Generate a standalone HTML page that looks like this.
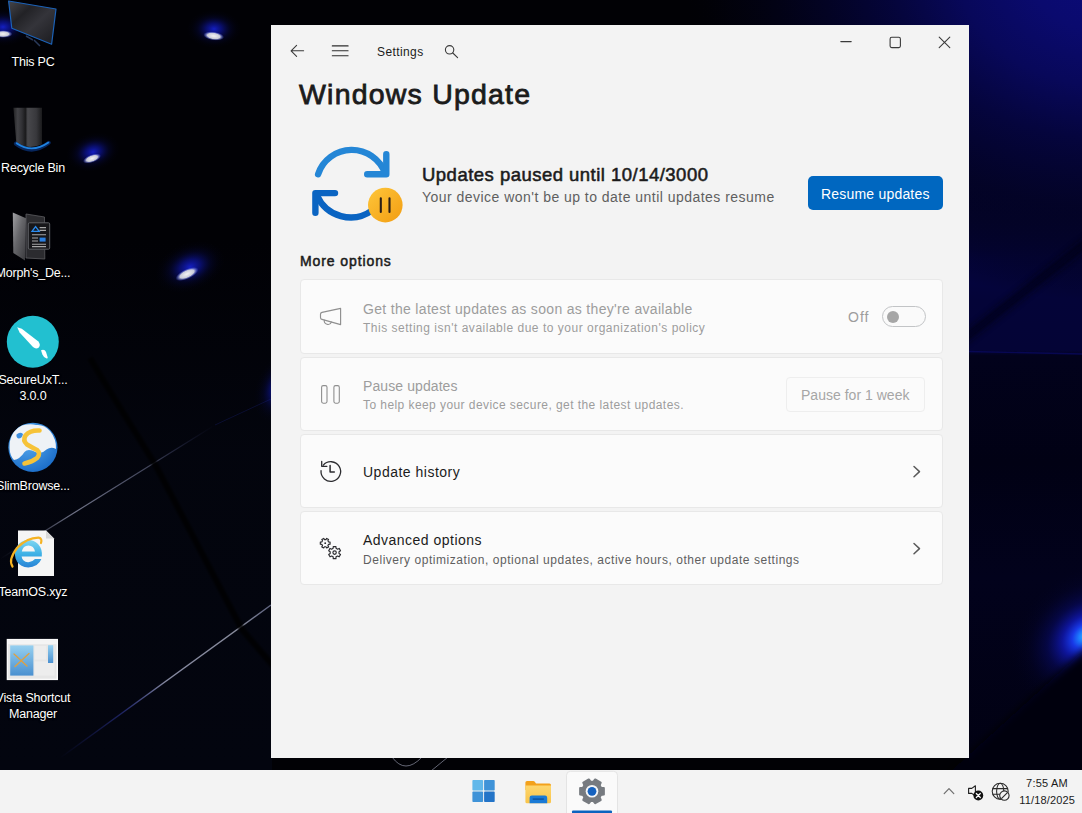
<!DOCTYPE html>
<html lang="en">
<head>
<meta charset="utf-8">
<title>Windows Update</title>
<style>
*{box-sizing:border-box;margin:0;padding:0}
html,body{width:1082px;height:813px;overflow:hidden;background:#010108}
body{position:relative;font-family:"Liberation Sans",sans-serif;color:#1b1b1b}
.abs{position:absolute}
#desk{position:absolute;left:0;top:0;width:1082px;height:770px;overflow:hidden;background:#010105}
.lbl{position:absolute;color:#fff;font-size:12.5px;line-height:16px;letter-spacing:-.2px;text-align:center;white-space:nowrap;text-shadow:0 1px 2px #000,0 0 2px #000}
#win{position:absolute;left:271px;top:25px;width:698px;height:733px;background:#f3f3f3;overflow:hidden}
.card{position:absolute;left:29px;width:643px;height:74px;background:#fbfbfb;border:1px solid #e8e8e8;border-radius:4px}
.t1{position:absolute;white-space:nowrap;font-size:14px;line-height:18px;color:#1b1b1b}
.t2{position:absolute;white-space:nowrap;font-size:12px;line-height:15px;color:#5f5f5f}
.dis .t1{color:#9d9d9d}.dis .t2{color:#9d9d9d}
#tb{position:absolute;left:0;top:770px;width:1082px;height:43px;background:#f3f3f3}
</style>
</head>
<body>
<div id="desk">
<svg class="abs" style="left:0;top:0" width="1082" height="770" viewBox="0 0 1082 770">
  <defs>
    <radialGradient id="halo" cx="50%" cy="50%" r="50%">
      <stop offset="0" stop-color="#1622d8" stop-opacity=".9"/>
      <stop offset=".3" stop-color="#0e16a8" stop-opacity=".62"/>
      <stop offset=".6" stop-color="#070b58" stop-opacity=".3"/>
      <stop offset=".85" stop-color="#04062c" stop-opacity=".1"/>
      <stop offset="1" stop-color="#04062c" stop-opacity="0"/>
    </radialGradient>
    <radialGradient id="core" cx="50%" cy="50%" r="50%">
      <stop offset="0" stop-color="#f4f4f4" stop-opacity="1"/>
      <stop offset=".6" stop-color="#d4d6e0" stop-opacity=".95"/>
      <stop offset="1" stop-color="#4a5cf0" stop-opacity="0"/>
    </radialGradient>
    <radialGradient id="trg" gradientUnits="userSpaceOnUse" cx="1112" cy="-34" r="430" gradientTransform="translate(1112 -34) scale(1 .78) translate(-1112 34)">
      <stop offset="0" stop-color="#0b0b7c"/>
      <stop offset=".2" stop-color="#0a0a6e"/>
      <stop offset=".36" stop-color="#08085a"/>
      <stop offset=".52" stop-color="#05053e" stop-opacity=".95"/>
      <stop offset=".72" stop-color="#030324" stop-opacity=".8"/>
      <stop offset=".9" stop-color="#020214" stop-opacity=".4"/>
      <stop offset="1" stop-color="#010108" stop-opacity="0"/>
    </radialGradient>
    <linearGradient id="tstrip" x1="0" y1="0" x2="1" y2="0">
      <stop offset="0" stop-color="#010105"/>
      <stop offset=".3" stop-color="#020218"/>
      <stop offset=".6" stop-color="#05053c"/>
      <stop offset="1" stop-color="#09096c"/>
    </linearGradient>
    <linearGradient id="rstrip" x1="0" y1="0" x2="0" y2="1">
      <stop offset="0" stop-color="#030326"/>
      <stop offset=".19" stop-color="#03032c"/>
      <stop offset=".285" stop-color="#040436"/>
      <stop offset=".335" stop-color="#040442"/>
      <stop offset=".39" stop-color="#040438"/>
      <stop offset=".455" stop-color="#040436"/>
      <stop offset=".462" stop-color="#02021c"/>
      <stop offset=".6" stop-color="#010114"/>
      <stop offset=".75" stop-color="#02021c"/>
      <stop offset="1" stop-color="#010112"/>
    </linearGradient>
    <filter id="bl2" x="-10%" y="-10%" width="120%" height="120%"><feGaussianBlur stdDeviation="3"/></filter>
    <filter id="bl" x="-10%" y="-10%" width="120%" height="120%"><feGaussianBlur stdDeviation="4"/></filter>
    <radialGradient id="rglow" cx="50%" cy="50%" r="50%">
      <stop offset="0" stop-color="#2ab8ff"/>
      <stop offset=".08" stop-color="#1c7cff"/>
      <stop offset=".17" stop-color="#1838e6"/>
      <stop offset=".3" stop-color="#1018b0" stop-opacity=".85"/>
      <stop offset=".5" stop-color="#090c70" stop-opacity=".5"/>
      <stop offset=".75" stop-color="#05063c" stop-opacity=".2"/>
      <stop offset="1" stop-color="#02021c" stop-opacity="0"/>
    </radialGradient>
    <linearGradient id="floor" x1="0" y1="0" x2="0" y2="1">
      <stop offset="0" stop-color="#03050e" stop-opacity="0"/>
      <stop offset=".4" stop-color="#03050e" stop-opacity=".9"/>
      <stop offset="1" stop-color="#03050f" stop-opacity="1"/>
    </linearGradient>
    <filter id="bl1" x="-20%" y="-10%" width="140%" height="120%"><feGaussianBlur stdDeviation="1.2"/></filter>
    <linearGradient id="ln2" x1="0" y1="0" x2="1" y2="0">
      <stop offset="0" stop-color="#2a34b0" stop-opacity="0"/>
      <stop offset=".3" stop-color="#3a44b8" stop-opacity=".5"/>
      <stop offset=".5" stop-color="#b0b4d0" stop-opacity=".75"/>
      <stop offset=".85" stop-color="#c0c4d8" stop-opacity=".7"/>
      <stop offset="1" stop-color="#9aa0c8" stop-opacity=".6"/>
    </linearGradient>
    <linearGradient id="ln" x1="0" y1="0" x2="1" y2="0">
      <stop offset="0" stop-color="#8a8fb0" stop-opacity="0"/>
      <stop offset=".35" stop-color="#b8bcd8" stop-opacity=".6"/>
      <stop offset=".7" stop-color="#9aa0c8" stop-opacity=".4"/>
      <stop offset="1" stop-color="#3a3f90" stop-opacity="0"/>
    </linearGradient>
  </defs>
  <rect width="1082" height="770" fill="#010105"/>
  <!-- right side wallpaper -->
  <rect x="969" y="0" width="113" height="770" fill="url(#rstrip)"/>
  <rect x="560" y="0" width="522" height="340" fill="url(#trg)"/>
  <path d="M960 342L1090 240" stroke="#010112" stroke-width="9" opacity=".75" filter="url(#bl2)"/>
  <path d="M969 351.5L1082 354" stroke="#0a0a64" stroke-width="1.4" opacity=".7"/>
  <ellipse cx="1085" cy="636" rx="84" ry="64" fill="url(#rglow)" transform="rotate(-42 1085 636)"/>
  <polygon points="950,772 1090,645 1090,780 950,780" fill="#02020e" filter="url(#bl)"/>
  <rect x="0" y="240" width="272" height="530" fill="url(#floor)"/>
  <!-- spotlights left -->
  <g>
    <ellipse cx="3" cy="27" rx="28" ry="19" fill="url(#halo)"/>
    <ellipse cx="3" cy="34" rx="9.5" ry="3.8" fill="url(#core)"/>
    <ellipse cx="214" cy="29" rx="27" ry="19" fill="url(#halo)"/>
    <ellipse cx="213.7" cy="36" rx="10.5" ry="4.4" fill="url(#core)" transform="rotate(8 213.7 36)"/>
    <ellipse cx="93" cy="152" rx="27" ry="19" fill="url(#halo)" transform="rotate(-15 93 152)"/>
    <ellipse cx="92" cy="158.5" rx="9.5" ry="4" fill="url(#core)" transform="rotate(-20 92 158.5)"/>
    <ellipse cx="190" cy="267" rx="36" ry="24" fill="url(#halo)" transform="rotate(-22 190 267)"/>
    <ellipse cx="187" cy="274" rx="12.5" ry="5" fill="url(#core)" transform="rotate(-25 187 274)"/>
    <ellipse cx="278" cy="388" rx="22" ry="36" fill="url(#halo)" opacity=".9" transform="rotate(20 278 388)"/>
  </g>
  <!-- faint lines -->
  <line x1="0" y1="559" x2="215" y2="425" stroke="url(#ln)" stroke-width="1.2"/>
  <line x1="215" y1="425" x2="271" y2="399" stroke="#2a34b0" stroke-opacity=".22" stroke-width="1"/>
  <line x1="60" y1="758" x2="271" y2="605" stroke="url(#ln2)" stroke-width="1.4"/>
  <path d="M90 358L103 380L156 466L242 629.5L275 668" fill="none" stroke="#000002" stroke-width="6" stroke-opacity=".8" filter="url(#bl1)"/>
  <path d="M392 757Q405 775 422 757M448 757L431 771" fill="none" stroke="#9a9cb0" stroke-opacity=".65" stroke-width="1"/>
</svg>
<svg id="dicons" class="abs" style="left:0;top:0;pointer-events:none" width="272" height="770" viewBox="0 0 272 770">
  <defs>
    <linearGradient id="mon" x1="0" y1="0" x2="1" y2="1"><stop offset="0" stop-color="#45454a"/><stop offset=".3" stop-color="#222226"/><stop offset=".55" stop-color="#34343a"/><stop offset="1" stop-color="#1a1a1e"/></linearGradient>
    <linearGradient id="bin" x1="0" y1="0" x2="1" y2="0"><stop offset="0" stop-color="#222224"/><stop offset=".15" stop-color="#424246"/><stop offset=".3" stop-color="#303034"/><stop offset=".42" stop-color="#1a1a1c"/><stop offset=".5" stop-color="#48484c"/><stop offset=".8" stop-color="#38383c"/><stop offset="1" stop-color="#1a1a1c"/></linearGradient>
    <linearGradient id="fold" x1="0" y1="0" x2="1" y2="1"><stop offset="0" stop-color="#a0a0a4"/><stop offset=".45" stop-color="#66666a"/><stop offset="1" stop-color="#38383c"/></linearGradient>
    <radialGradient id="glb" cx="40%" cy="35%" r="70%"><stop offset="0" stop-color="#5aaef0"/><stop offset="1" stop-color="#1a6cc8"/></radialGradient>
    <linearGradient id="ie" x1="0" y1="0" x2="0" y2="1"><stop offset="0" stop-color="#7fd6f2"/><stop offset=".5" stop-color="#3fb2e6"/><stop offset="1" stop-color="#2a84d6"/></linearGradient>
    <linearGradient id="vs" x1="0" y1="0" x2="0" y2="1"><stop offset="0" stop-color="#96d0f0"/><stop offset="1" stop-color="#4a90d0"/></linearGradient>
  </defs>
  <!-- This PC -->
  <polygon points="8.6,1 56,9 51.6,44.2 11.8,28.2" fill="url(#mon)" stroke="#1c62b8" stroke-width="1.2" stroke-linejoin="round"/>
  <path d="M26 36L33 40M34 40L40 46" stroke="#2a3a5a" stroke-width="1.5"/>
  <!-- Recycle Bin -->
  <path d="M13.4 107.8H42V144.5Q30 149.5 16.4 144.2Z" fill="url(#bin)"/>
  <path d="M15.8 143.6Q32 156 48.8 142.8" fill="none" stroke="#0c3f98" stroke-width="4" stroke-linecap="round" opacity=".6"/>
  <path d="M16.6 143.2Q32 154 48.4 142.6" fill="none" stroke="#1f82e0" stroke-width="1.8" stroke-linecap="round"/>
  <!-- Morph's folder -->
  <polygon points="26,214 44.5,217 44.8,259 26,258" fill="#2b2b2f" stroke="#5c5c60" stroke-width=".8"/>
  <polygon points="12.8,212.6 26,218.2 25,260.4 13.3,253" fill="url(#fold)"/>
  <rect x="28.3" y="222.8" width="21.4" height="26.4" rx="1.2" fill="#17171a" stroke="#5e6064" stroke-width="1"/>
  <polygon points="35.6,226.6 39.2,231.4 32,231.4" fill="none" stroke="#2a8cf0" stroke-width="1.3"/>
  <path d="M39.6 227.6H46M39.6 230.4H46M32 234.8H46M32 238H38M32 241H38M32 244.2H46M32 246.6H46" stroke="#a8a8a8" stroke-width="1.1"/>
  <rect x="39.6" y="237.6" width="6" height="4" fill="#2a7fe0"/>
  <!-- SecureUxTheme -->
  <circle cx="32.8" cy="341.8" r="26" fill="#22c0d0"/>
  <path d="M17.2 327.2L21.8 328.8L38.4 341.6Q41 345 38.8 347.4Q36 349.6 33 347L19.6 332.4Z" fill="#fff"/>
  <path d="M41 350.2Q44.6 348.8 46 352L47.7 357.6Q47.8 358.7 46.6 358.4Q43.4 357.4 42.4 354.6Z" fill="#fff"/>
  <!-- SlimBrowser -->
  <circle cx="32.9" cy="447.3" r="24.6" fill="url(#glb)"/>
  <path d="M10 441Q12.5 430 22 425.5Q30 423.5 36 425Q44 424 50 431Q56.5 439 56 449Q51 446.5 46.5 449.5Q41 455 35.5 452Q28 448 24.5 452Q20 459 14 460Q10 456 9.6 449Q9.4 445 10 441Z" fill="#eef2f6"/><path d="M16.5 434.5Q20 431.5 23 434Q22 438.5 18.5 438.5Q16 437.5 16.5 434.5Z" fill="#3d8fe0"/>
  <path d="M39.5 430.5Q30 430 25.5 435.5Q22.5 440.5 27 444.5Q33 448 37 450Q41 453.5 37 458Q32 462 24.5 463.5" fill="none" stroke="#f6c338" stroke-width="4.6" stroke-linecap="round"/>
  <!-- TeamOS.xyz -->
  <path d="M18 530.6H46L54 538.6V575.9H18Z" fill="#f5f5f5"/>
  <path d="M46 530.6V538.6H54Z" fill="#d8d8d8"/>
  <g>
    <path d="M15.5 556.4H41.8Q42.6 549 38 544Q33.5 539.6 27.5 540Q21 540.6 17.2 546Q13.6 552 15.6 558.6Q18 565.4 24.6 567Q31 568.4 36.6 565Q40 562.6 41.4 559H35Q32 562.4 28 562.2Q22.4 561.6 21.6 556.4ZM21.8 551.4Q23 545.6 28.4 545.4Q34 545.6 35 551.4Z" fill="url(#ie)" fill-rule="evenodd"/>
    <path d="M12.5 566.5Q8 560 17 548Q27 537.5 38.6 537.6Q42.5 538.4 41 543" fill="none" stroke="#f5b222" stroke-width="2.2" stroke-linecap="round"/>
  </g>
  <!-- Vista Shortcut Manager -->
  <rect x="7.4" y="639.6" width="49.9" height="39.8" fill="#e6e6e6" stroke="#fafafa" stroke-width="1.4"/>
  <rect x="8" y="640.2" width="48.8" height="4" fill="#f4f4f4"/>
  <rect x="10.2" y="645.4" width="23.2" height="30.2" fill="url(#vs)"/>
  <path d="M14 654L27 666M29 653.5L15 666.5" stroke="#e0a040" stroke-width="1.3" stroke-linecap="round"/>
  <rect x="34.6" y="646" width="11.6" height="13.5" fill="#ededed"/>
  <rect x="34.6" y="661.5" width="20" height="14" fill="#ededed"/>
  <rect x="48" y="645.2" width="5.2" height="17.8" fill="url(#vs)"/>
</svg>
<div class="lbl" id="l1" style="left:-7px;width:80px;top:54px">This PC</div>
<div class="lbl" id="l2" style="left:-7px;width:80px;top:160px">Recycle Bin</div>
<div class="lbl" id="l3" style="left:-7px;width:80px;top:265px">Morph's_De...</div>
<div class="lbl" id="l4" style="left:-7px;width:80px;top:372px">SecureUxT...<br>3.0.0</div>
<div class="lbl" id="l5" style="left:-7px;width:80px;top:478px">SlimBrowse...</div>
<div class="lbl" id="l6" style="left:-7px;width:80px;top:584px">TeamOS.xyz</div>
<div class="lbl" id="l7" style="left:-7px;width:80px;top:690px">Vista Shortcut<br>Manager</div>
</div>

<div id="win">
  <div class="abs" id="settings" style="left:106px;top:20px;font-size:12px;line-height:15px;letter-spacing:.4px;color:#1b1b1b;white-space:nowrap">Settings</div>
  <div class="abs" id="h1" style="left:28px;top:51px;font-size:28.5px;line-height:36px;letter-spacing:1.2px;-webkit-text-stroke:.8px #1b1b1b;color:#1b1b1b;white-space:nowrap">Windows Update</div>

  <div class="abs" id="st1" style="left:151px;top:138px;font-size:18.5px;line-height:24px;letter-spacing:.48px;-webkit-text-stroke:.55px #1b1b1b;color:#1b1b1b;white-space:nowrap">Updates paused until 10/14/3000</div>
  <div class="abs" id="st2" style="left:151px;top:163px;font-size:14px;line-height:18px;letter-spacing:.47px;color:#5f5f5f;white-space:nowrap">Your device won't be up to date until updates resume</div>
  <div class="abs" id="btn" style="left:537px;top:151px;width:135px;height:34px;border-radius:5px;background:#0067c0"></div>
  <div class="abs" id="btnt" style="left:550px;top:160px;color:#fff;font-size:14px;line-height:18px;letter-spacing:.2px;white-space:nowrap">Resume updates</div>

  <div class="abs" id="more" style="left:29px;top:227px;font-size:14px;line-height:18px;letter-spacing:.9px;-webkit-text-stroke:.5px #1b1b1b;color:#1b1b1b;white-space:nowrap">More options</div>

  <div class="card dis" style="top:254px;height:75px">
    <div class="t1" id="c1a" style="left:62px;top:20px;letter-spacing:.32px">Get the latest updates as soon as they're available</div>
    <div class="t2" id="c1b" style="left:62px;top:41px;letter-spacing:.51px">This setting isn't available due to your organization's policy</div>
    <div class="t1" id="off" style="left:547px;top:28px;letter-spacing:1px">Off</div>
    <div class="abs" style="left:581px;top:26px;width:44px;height:21px;border:1px solid #c2c4c6;border-radius:11px;background:#fafafa"></div>
    <div class="abs" style="left:586px;top:31px;width:12px;height:12px;border-radius:6px;background:#a6a6a6"></div>
  </div>

  <div class="card dis" style="top:332px">
    <div class="t1" id="c2a" style="left:62px;top:19px;letter-spacing:.09px">Pause updates</div>
    <div class="t2" id="c2b" style="left:62px;top:40px;letter-spacing:.43px">To help keep your device secure, get the latest updates.</div>
    <div class="abs" style="left:485px;top:19px;width:139px;height:35px;border:1px solid #eeeeee;border-radius:4px;background:#fbfbfb"></div>
    <div class="abs" id="pbtn" style="left:500px;top:28px;color:#a6a6a6;font-size:14px;line-height:18px;letter-spacing:.02px;white-space:nowrap">Pause for 1 week</div>
  </div>

  <div class="card" style="top:409px">
    <div class="t1" id="c3a" style="left:62px;top:28px;letter-spacing:.5px">Update history</div>
  </div>

  <div class="card" style="top:486px;height:74px">
    <div class="t1" id="c4a" style="left:62px;top:19px;letter-spacing:.48px">Advanced options</div>
    <div class="t2" id="c4b" style="left:62px;top:41px;letter-spacing:.54px">Delivery optimization, optional updates, active hours, other update settings</div>
  </div>
</div>

<div id="tb">
  <div class="abs" id="time" style="right:14px;top:6px;font-size:11px;line-height:14px;letter-spacing:.23px;color:#1b1b1b;white-space:nowrap">7:55 AM</div>
  <div class="abs" id="date" style="right:7px;top:23px;font-size:11px;line-height:14px;letter-spacing:.15px;color:#1b1b1b;white-space:nowrap">11/18/2025</div>
</div>
<svg id="icons" class="abs" style="left:0;top:0;pointer-events:none" width="1082" height="813" viewBox="0 0 1082 813" fill="none">
  <defs>
    <linearGradient id="og" x1="0" y1="0" x2="1" y2="1"><stop offset="0" stop-color="#fec63a"/><stop offset="1" stop-color="#f29d12"/></linearGradient>
    <linearGradient id="wl" x1="0" y1="0" x2="1" y2="1"><stop offset="0" stop-color="#72c6f0"/><stop offset="1" stop-color="#1b6cc4"/></linearGradient>
    <linearGradient id="fy" x1="0" y1="0" x2="0" y2="1"><stop offset="0" stop-color="#fdd66e"/><stop offset="1" stop-color="#f9c44a"/></linearGradient>
  </defs>
  <!-- title bar -->
  <g stroke="#3a3a3a" stroke-width="1.1" stroke-linecap="round" stroke-linejoin="round">
    <path d="M303.6 50.8H291.2M296.6 45.3L291.1 50.8L296.6 56.3"/>
    <path d="M332.3 45.9H348.1M332.3 50.8H348.1M332.3 55.7H348.1" stroke="#2e2e2e"/>
    <circle cx="449.6" cy="49.8" r="4.2"/>
    <path d="M452.8 53L457.6 57.6"/>
    <path d="M840.8 41.6H851.2"/>
    <rect x="890.1" y="37.3" width="10.3" height="10.3" rx="1.6"/>
    <path d="M939.2 37.2L949.8 47.7M949.8 37.2L939.2 47.7"/>
  </g>
  <!-- update icon -->
  <g stroke-width="6.4" stroke-linecap="round" stroke-linejoin="round">
    <path d="M318.1 174.2A35.4 35.4 0 0 1 385 173.2" stroke="#2486d6"/>
    <path d="M386.3 154.3V174.2H367.2" stroke="#2486d6"/>
    <path d="M317 195.5A36.7 36.7 0 0 0 372 210.5" stroke="#0a64c2"/>
    <path d="M315.4 212.7V193.1H335" stroke="#0a64c2"/>
  </g>
  <circle cx="385.3" cy="205.1" r="17.3" fill="url(#og)"/>
  <path d="M380.8 198.3V212M389.5 198.3V212" stroke="#2b1e16" stroke-width="2.1" stroke-linecap="round"/>
  <!-- megaphone (disabled) -->
  <g stroke="#8f8f8f" stroke-width="1.15" stroke-linejoin="round" stroke-linecap="round">
    <path d="M340.6 308.4V324.6L322 319.4Q320.5 319 320.5 317.4V314.2Q320.5 312.8 322 312.4Z"/>
    <path d="M324.3 320.2A3.7 3.7 0 0 0 331.4 322.1"/>
  </g>
  <!-- pause (disabled) -->
  <g stroke="#8f8f8f" stroke-width="1.1">
    <rect x="321.6" y="385.6" width="5.4" height="17.6" rx="1.6"/>
    <rect x="333.9" y="385.6" width="5.4" height="17.6" rx="1.6"/>
  </g>
  <!-- history -->
  <g stroke="#2c2c30" stroke-width="1.3" stroke-linecap="round" stroke-linejoin="round">
    <path d="M323.3 465.2A9.8 9.8 0 1 1 321.04 470.65"/>
    <path d="M321.7 461.5V466.3H326.9"/>
    <path d="M330.1 465.4V472.1H334.3" stroke-width="1.5"/>
  </g>
  <!-- gears -->
  <g stroke="#2c2c30" stroke-width="1.15" stroke-linejoin="round">
    <path d="M328.61 542.05 L330.08 542.11 L330.08 544.29 L328.61 544.35 L327.90 545.58 L328.58 546.88 L326.70 547.97 L325.91 546.73 L324.49 546.73 L323.70 547.97 L321.82 546.88 L322.50 545.58 L321.79 544.35 L320.32 544.29 L320.32 542.11 L321.79 542.05 L322.50 540.82 L321.82 539.52 L323.70 538.43 L324.49 539.67 L325.91 539.67 L326.70 538.43 L328.58 539.52 L327.90 540.82Z"/>
    <circle cx="325.2" cy="543.2" r=".9" fill="#2c2c30" stroke="none"/>
    <path d="M336.04 556.86 L335.95 558.65 L333.25 558.65 L333.16 556.86 L331.62 555.98 L330.04 556.80 L328.68 554.45 L330.19 553.49 L330.19 551.71 L328.68 550.75 L330.04 548.40 L331.62 549.22 L333.16 548.34 L333.25 546.55 L335.95 546.55 L336.04 548.34 L337.58 549.22 L339.16 548.40 L340.52 550.75 L339.01 551.71 L339.01 553.49 L340.52 554.45 L339.16 556.80 L337.58 555.98Z"/>
    <circle cx="334.6" cy="552.6" r="1.7"/>
  </g>
  <!-- chevrons -->
  <g stroke="#5a5a5a" stroke-width="1.5" stroke-linecap="round" stroke-linejoin="round">
    <path d="M914 466.5L919.5 471.6L914 476.7"/>
    <path d="M914 543.5L919.5 548.6L914 553.7"/>
  </g>
  <!-- taskbar -->
  <path d="M566.5 813V775.3Q566.5 771.3 570.5 771.3H613.5Q617.5 771.3 617.5 775.3V813" fill="#fafafa" stroke="#e4e4e4" stroke-width="1"/>
  <rect x="572" y="810.6" width="40" height="3" rx="1" fill="#0b63bf"/>
  <g>
    <rect x="472.4" y="780" width="10.7" height="10.6" rx=".8" fill="#62b8ea"/>
    <rect x="484.1" y="780" width="10.6" height="10.6" rx=".8" fill="#3f93d8"/>
    <rect x="472.4" y="791.6" width="10.7" height="10.4" rx=".8" fill="#3f93d8"/>
    <rect x="484.1" y="791.6" width="10.6" height="10.4" rx=".8" fill="#2374c8"/>
  </g>
  <g>
    <path d="M525.4 782.6Q525.4 781 527 781H533.2Q534.2 781 534.8 781.8L536 783.4H549.4Q551 783.4 551 785V790H525.4Z" fill="#f3a11c"/>
    <path d="M525.4 785.4H551V801.8Q551 803.3 549.5 803.3H526.9Q525.4 803.3 525.4 801.8Z" fill="url(#fy)"/>
    <path d="M529.6 803.3V797.8Q529.6 795.6 531.8 795.6H545Q547.2 795.6 547.2 797.8V803.3Z" fill="#1a7ad6"/>
    <rect x="532.5" y="798.3" width="11.6" height="1.6" rx=".8" fill="#0f58a8"/>
  </g>
  <g>
    <path d="M600.93 787.77 L603.78 788.14 L603.78 794.46 L600.93 794.83 L599.52 797.26 L600.63 799.93 L595.16 803.08 L593.40 800.80 L590.60 800.80 L588.84 803.08 L583.37 799.93 L584.48 797.26 L583.07 794.83 L580.22 794.46 L580.22 788.14 L583.07 787.77 L584.48 785.34 L583.37 782.67 L588.84 779.52 L590.60 781.80 L593.40 781.80 L595.16 779.52 L600.63 782.67 L599.52 785.34Z" fill="#777b80" stroke="#777b80" stroke-width="2.2" stroke-linejoin="round"/>
    <circle cx="592" cy="791.3" r="6.3" fill="#f4f6f8"/>
    <circle cx="592" cy="791.3" r="4.4" fill="#1662bf"/>
  </g>
  <!-- tray -->
  <path d="M944.2 793.6L949 788.6L953.8 793.6" stroke="#6e6e6e" stroke-width="1.2" stroke-linecap="round" stroke-linejoin="round"/>
  <g stroke="#1f1f1f" stroke-width="1.1" stroke-linejoin="round">
    <path d="M975.4 785.8V796L971.8 793.4H968.6V788.4H971.8Z"/>
  </g>
  <circle cx="978.3" cy="795.5" r="4.9" fill="#111"/>
  <path d="M976.3 793.5L980.3 797.5M980.3 793.5L976.3 797.5" stroke="#fff" stroke-width="1.2" stroke-linecap="round"/>
  <g stroke="#2a2a2a" stroke-width="1.05">
    <circle cx="1000.2" cy="791.3" r="8"/>
    <ellipse cx="1000.2" cy="791.3" rx="3.6" ry="8"/>
    <path d="M992.6 788.6H1007.8M992.6 794.2H1007.8"/>
  </g>
  <circle cx="1004.4" cy="795.6" r="4.7" fill="#f3f3f3" stroke="#2a2a2a" stroke-width="1.1"/>
  <path d="M1001.4 798.6L1007.4 792.6" stroke="#2a2a2a" stroke-width="1.1"/>
</svg>
</body>
</html>
